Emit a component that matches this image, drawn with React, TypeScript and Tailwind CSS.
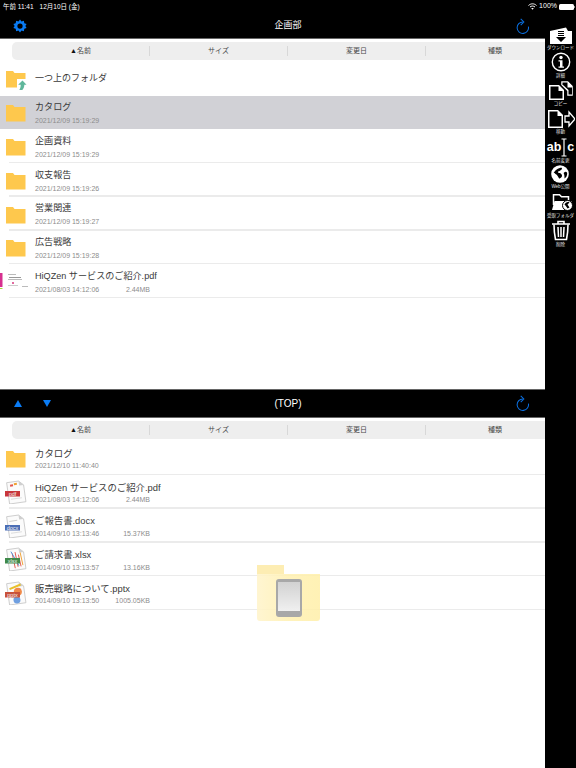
import React from "react";

const FONT = '"Liberation Sans","Noto Sans CJK JP",sans-serif';

function Gear() {
  return (
    <svg width="14" height="14" viewBox="0 0 24 24">
      <path fill="#0a7cf5" fillRule="evenodd" d="M12 1l2.600 3.200 4-1 .8 4 3.900 1.400L21.200 12l2.100 3.400-3.900 1.400-.8 4-4-1L12 23l-2.600-3.200-4 1-.8-4-3.900-1.400L2.800 12 .7 8.600l3.900-1.400.8-4 4 1L12 1zm0 6.500a4.500 4.500 0 100 9 4.500 4.500 0 000-9z" />
    </svg>
  );
}

function Refresh() {
  return (
    <svg width="14" height="16" viewBox="0 0 24 28" fill="none" stroke="#0a6fe0" strokeWidth="1.800">
      <path d="M21.500 15A10 10 0 1 1 12 7" />
      <path d="M8 1.500L13.500 7 8 12.500" />
    </svg>
  );
}

function Folder({ up }: { up?: boolean }) {
  return (
    <svg width="24" height="24" viewBox="0 0 24 24" className="shrink-0">
      <path fill="#fec84d" d="M3 5h7l1.500 2H22.500v14.500H3z" />
      {up && <path fill="#fff" d="M14 13h10v11H14z" />}
      {up && <path fill="#5fb79b" d="M19.500 14.500l4 4.300h-2.200c0 2-.5 3.900-2 5.200h-3c1.100-1.500 1.400-3.300 1.400-5.200h-2.500z" />}
    </svg>
  );
}

function Doc({ label, color, art }: { label: string; color: string; art: React.ReactNode }) {
  return (
    <svg width="24" height="24" viewBox="0 0 24 24" className="shrink-0">
      <g transform="rotate(-8 13 12)">
        <path fill="#fbfbfb" stroke="#bdbdbd" strokeWidth="0.700" d="M5 1.500h12l4.500 4.500v17H5z" />
        <path fill="#cfcfcf" d="M17 1.500l4.500 4.500H17z" />
        {art}
      </g>
      <rect x="2" y="11" width="15" height="5.500" fill={color} />
      <text x="9.500" y="15.500" textAnchor="middle" fontSize="5.500" fill="#f3f3f3" fontFamily={FONT}>{label}</text>
    </svg>
  );
}

const pdfArt = (
  <>
    <rect x="8" y="4" width="3" height="2" fill="#e2574c" />
    <rect x="12" y="3" width="3" height="2" fill="#f0a030" />
    <rect x="7" y="18" width="11" height="1" fill="#ddd" />
  </>
);
const docArt = (
  <>
    <rect x="7" y="6" width="8" height="1" fill="#ccc" />
    <rect x="7" y="18" width="11" height="1" fill="#ddd" />
  </>
);
const xlsArt = (
  <>
    <path d="M10 6l1 15M13 5l1 15M16 8l1 12" stroke="#e2574c" strokeWidth="0.900" />
    <path d="M9 4l6 15" stroke="#4a8fd8" strokeWidth="0.900" />
    <path d="M18 6l1 13" stroke="#f0a030" strokeWidth="0.900" />
  </>
);
const pptArt = (
  <>
    <circle cx="15" cy="11" r="4" fill="#f08a4a" />
    <circle cx="13" cy="19" r="3.500" fill="#6f9fe0" />
    <rect x="7" y="5" width="12" height="2" fill="#e8c02a" transform="rotate(-15 12 6)" />
  </>
);

function PdfThumb() {
  return (
    <svg width="30" height="20" viewBox="0 0 30 20" className="shrink-0 -ml-[3px]">
      <rect x="0" y="2" width="2.500" height="14" fill="#d6308f" />
      <rect x="0" y="17" width="2.500" height="1" fill="#a8d640" />
      <rect x="8" y="3" width="8" height="1" fill="#bbb" />
      <rect x="9" y="6" width="12" height="1" fill="#999" />
      <rect x="8" y="8" width="14" height="1" fill="#bbb" />
      <rect x="12" y="11" width="2" height="2" fill="#e26aa0" />
      <rect x="8" y="14" width="10" height="1" fill="#ccc" />
      <rect x="22" y="15" width="6" height="1" fill="#bbb" />
    </svg>
  );
}

function Row({ icon, name, date, size, selected, lower }: { icon: React.ReactNode; name: string; date: string; size?: string; selected?: boolean; lower?: boolean }) {
  return (
    <div className={`relative flex h-[33.75px] shrink-0 items-center pl-[3px] ${selected ? "bg-[#d1d1d6]" : ""}`}>
      <div className="flex w-[32px] shrink-0 items-center">{icon}</div>
      <div className={`flex h-full flex-col ${lower ? "pt-[4.500px]" : "pt-[3.500px]"}`}>
        <div className={`whitespace-nowrap leading-[16px] text-[#3a3a3a] ${lower ? "text-[9.400px]" : "text-[9.100px]"}`}>{name}</div>
        <div className={`relative h-[11px] whitespace-nowrap text-[7px] leading-[11px] text-[#8c8c8c] ${lower ? "-mt-[1.500px]" : ""}`}>
          {date}
          {size && <span className="absolute left-[62px] w-[53px] text-right">{size}</span>}
        </div>
      </div>
      {!selected && <div className="absolute bottom-0 left-[9px] right-0 h-[1.500px] bg-[#ebebeb]" />}
    </div>
  );
}

function SortHeader() {
  return (
    <div className="ml-[12px] flex h-[18px] w-[552px] shrink-0 items-center rounded-l-[5px] bg-[#eeeeee] text-[7px] text-[#484848]">
      <div className="flex h-[10px] w-[138px] items-center justify-center border-r border-[#d8d8d8]">
        <span className="text-[#111]">▲</span>名前
      </div>
      <div className="flex h-[10px] w-[138px] items-center justify-center border-r border-[#d8d8d8]">サイズ</div>
      <div className="flex h-[10px] w-[138px] items-center justify-center border-r border-[#d8d8d8]">変更日</div>
      <div className="flex h-[10px] w-[138px] items-center justify-center">種類</div>
    </div>
  );
}

function Tool({ icon, label, gap }: { icon: React.ReactNode; label: string; gap?: string }) {
  return (
    <div className={`flex flex-col items-center ${gap ?? ""}`}>
      {icon}
      <div className="whitespace-nowrap text-[4.500px] leading-[7px] text-[#e0e0e0]">{label}</div>
    </div>
  );
}

function Sidebar() {
  return (
    <div className="flex w-[31px] shrink-0 flex-col items-center overflow-hidden bg-black pt-[27px]">
      <Tool
        label="ダウンロード"
        icon={
          <svg width="24" height="17" viewBox="0 0 24 17" className="block">
            <path fill="#fff" d="M1 4L17 0.500l2 3.500h4v13H1z" />
            <path fill="#000" d="M9 4h6v1H9zM9 6h6v1H9zM9 8h6v1H9zM7 10h10l-5 5z" />
          </svg>
        }
      />
      <Tool
        gap="mt-[1px]"
        label="詳細"
        icon={
          <svg width="20" height="20" viewBox="0 0 20 20" className="block">
            <circle cx="10" cy="10" r="8.700" fill="none" stroke="#fff" strokeWidth="1.400" />
            <circle cx="10" cy="5.500" r="1.700" fill="#fff" />
            <path fill="#fff" d="M7.500 8.200h4v6.300h1.500v1.200H7.500v-1.200H9V9.400H7.500z" />
          </svg>
        }
      />
      <Tool
        gap="mt-[2px]"
        label="コピー"
        icon={
          <svg width="26" height="19" viewBox="0 0 26 19" className="block">
            <path fill="#fff" d="M13 0h7l5 5v10h-6v-5l-6-6z" stroke="#000" strokeWidth="0.500" />
            <path fill="#000" d="M14.500 1.500h5v5h4.500v7h-3.500V9L15 4h-.5z" />
            <path fill="#fff" d="M1 4h10l5 5v10H1z" />
            <path fill="#000" d="M2.500 5.500h8v4.500h4v7.500h-12z" />
          </svg>
        }
      />
      <Tool
        gap="mt-[2px]"
        label="移動"
        icon={
          <svg width="28" height="19" viewBox="0 0 28 19" className="block">
            <path fill="#fff" d="M1 1h10l5 5v13H1z" />
            <path fill="#000" d="M2.500 2.500h8v4.500h4v10.500h-12z" />
            <path fill="none" stroke="#fff" strokeWidth="1.300" d="M18 7h4V3l6 7-6 7v-4h-4z" />
          </svg>
        }
      />
      <Tool
        gap="mt-[2px]"
        label="名前変更"
        icon={
          <div className="flex h-[20px] items-center whitespace-nowrap text-[12.500px] font-bold leading-[20px] text-white">
            <span>ab</span>
            <svg width="6" height="19" viewBox="0 0 6 19" className="block">
              <path fill="none" stroke="#fff" strokeWidth="1.200" d="M.5 1h5M3 1v17M.5 18h5" />
            </svg>
            <span>c</span>
          </div>
        }
      />
      <Tool
        gap="mt-[1px]"
        label="Web公開"
        icon={
          <svg width="18" height="18" viewBox="0 0 20 20" className="block">
            <circle cx="10" cy="10" r="9.800" fill="#fff" />
            <path fill="#000" d="M3 9c1-3 5-6 9-6 1 2-2 3-3 4-2 0-1 2 0 2 2 0 4 2 3 4-1 1-2 2-3 2-1-2-2-4-4-5-1-1-1-1-2-1zM14 9c2-2 3-2 4 0 0 3-1 5-3 6 0-2 0-4-1-6z" />
          </svg>
        }
      />
      <Tool
        gap="mt-[1px]"
        label="受取フォルダ"
        icon={
          <svg width="24" height="21" viewBox="0 0 24 21" className="block">
            <path fill="none" stroke="#fff" strokeWidth="1.500" d="M4.500 14V3.800h6l2 2h7V9" />
            <path fill="#fff" d="M3 19l2.500-9h17l-2.500 9z" />
            <circle cx="18.500" cy="14.500" r="5" fill="#fff" stroke="#000" />
            <path fill="#000" d="M15.500 13.500c1-2 3-3 5-2l-2 2 2 3-2 1c-1-2-2-3-3-4z" />
          </svg>
        }
      />
      <Tool
        gap="mt-[1px]"
        label="削除"
        icon={
          <svg width="20" height="21" viewBox="0 0 20 21" fill="none" stroke="#fff" className="block">
            <path strokeWidth="1.600" d="M1 4h18M7 4V1.500h6V4" />
            <path strokeWidth="1.600" d="M3 4.500c0 5 .5 10 1.500 15h11c1-5 1.500-10 1.500-15" />
            <path strokeWidth="1.500" d="M7 7l.5 10M10 7v10M13 7l-.5 10" />
          </svg>
        }
      />
    </div>
  );
}

function DragFolder() {
  return (
    <div className="pointer-events-none absolute left-[257px] top-[565px] h-[56px] w-[63px]">
      <div className="h-[9px] w-[27px] bg-[#fde9a0]/80" />
      <div className="flex h-[47px] w-[63px] items-center justify-center rounded-b-[3px] bg-gradient-to-r from-[#fff4cc]/90 via-[#fff0b0]/85 to-[#ffefa8]/85">
        <div className="flex h-[38px] w-[26px] items-start justify-center rounded-[3px] bg-[#a8a8a8] pt-[3px]">
          <div className="h-[29px] w-[22px] bg-gradient-to-b from-[#d2d2d2] to-[#f0f0f0]" />
        </div>
      </div>
    </div>
  );
}

export default function App() {
  return (
    <div className="relative flex h-[768px] w-[576px] overflow-hidden bg-white" style={{ fontFamily: FONT }}>
      <div className="flex w-[545px] shrink-0 flex-col overflow-hidden">
        {/* top pane */}
        <div className="flex h-[39px] shrink-0 flex-col border-b border-[#666] bg-black">
          <div className="flex h-[13px] items-center whitespace-nowrap pl-[3px] text-[6.500px] text-white">
            <span>午前 11:41</span>
            <span className="ml-[6px]">12月10日 (金)</span>
          </div>
          <div className="flex flex-1 items-center">
            <div className="flex w-[60px] pl-[13px]"><Gear /></div>
            <div className="flex-1 text-center text-[9px] text-white">企画部</div>
            <div className="flex w-[29px]"><Refresh /></div>
          </div>
        </div>
        <div className="mt-[3px]"><SortHeader /></div>
        <div className="flex h-[35.500px] shrink-0 items-center pl-[3px]">
          <div className="flex w-[32px]"><Folder up /></div>
          <div className="pt-[2px] text-[9px] text-[#3a3a3a]">一つ上のフォルダ</div>
        </div>
        <Row selected icon={<Folder />} name="カタログ" date="2021/12/09 15:19:29" />
        <Row icon={<Folder />} name="企画資料" date="2021/12/09 15:19:29" />
        <Row icon={<Folder />} name="収支報告" date="2021/12/09 15:19:26" />
        <Row icon={<Folder />} name="営業関連" date="2021/12/09 15:19:27" />
        <Row icon={<Folder />} name="広告戦略" date="2021/12/09 15:19:28" />
        <Row icon={<PdfThumb />} name="HiQZen サービスのご紹介.pdf" date="2021/08/03 14:12:06" size="2.44MB" />
        <div className="flex-1" />
        {/* bottom pane */}
        <div className="flex h-[29px] shrink-0 items-center border-y border-[#666] bg-black">
          <div className="flex w-[60px] items-center pl-[14px]">
            <svg width="8" height="7" viewBox="0 0 8 7"><path fill="#0a7cf5" d="M4 0l4 7H0z" /></svg>
            <svg width="8" height="7" viewBox="0 0 8 7" className="ml-[21px]"><path fill="#0a7cf5" d="M0 0h8L4 7z" /></svg>
          </div>
          <div className="flex-1 text-center text-[10px] text-white">(TOP)</div>
          <div className="flex w-[29px]"><Refresh /></div>
        </div>
        <div className="mt-[3px]"><SortHeader /></div>
        <div className="h-[2.500px] shrink-0" />
        <Row lower icon={<Folder />} name="カタログ" date="2021/12/10 11:40:40" />
        <Row lower icon={<Doc label="pdf" color="#c8363a" art={pdfArt} />} name="HiQZen サービスのご紹介.pdf" date="2021/08/03 14:12:06" size="2.44MB" />
        <Row lower icon={<Doc label="docx" color="#4a6db5" art={docArt} />} name="ご報告書.docx" date="2014/09/10 13:13:46" size="15.37KB" />
        <Row lower icon={<Doc label="xlsx" color="#3f8a4a" art={xlsArt} />} name="ご請求書.xlsx" date="2014/09/10 13:13:57" size="13.16KB" />
        <Row lower icon={<Doc label="pptx" color="#c8503a" art={pptArt} />} name="販売戦略について.pptx" date="2014/09/10 13:13:50" size="1005.05KB" />
        <div className="h-[158px] shrink-0" />
      </div>
      <Sidebar />
      {/* status right, over both columns */}
      <div className="absolute right-[1px] top-0 flex h-[13px] items-center gap-[2px] text-[7px] text-white">
        <svg width="9" height="7" viewBox="0 0 18 14"><path fill="none" stroke="#fff" strokeWidth="2" d="M1 5c5-4.500 11-4.500 16 0M4 8c3-2.500 7-2.500 10 0" /><path fill="#fff" d="M6.500 10.500c1.500-1 3.500-1 5 0L9 13.500z" /></svg>
        <span>100%</span>
        <span className="flex items-center">
          <span className="block h-[6px] w-[15px] rounded-[1.500px] bg-white" />
          <span className="block h-[2px] w-[1px] bg-[#888]" />
        </span>
      </div>
      <DragFolder />
    </div>
  );
}
